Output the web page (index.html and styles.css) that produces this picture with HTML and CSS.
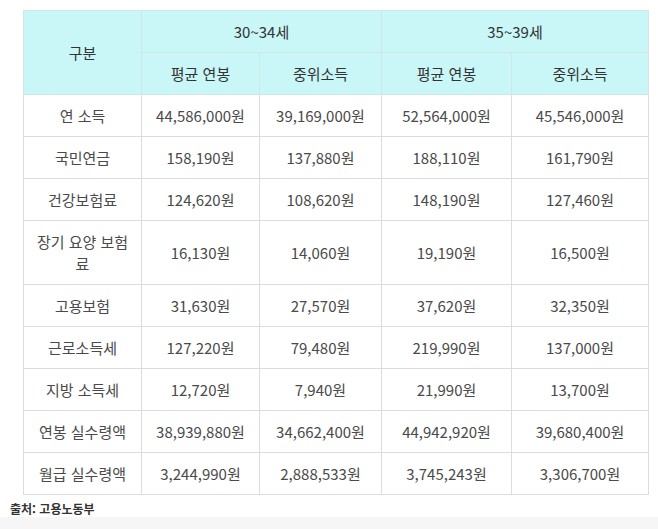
FILE: index.html
```html
<!DOCTYPE html>
<html lang="ko">
<head>
<meta charset="utf-8">
<link rel="stylesheet" href="styles.css">
</head>
<body>
<div class="page">
  <table class="salary">
    <colgroup>
      <col class="c1"><col class="c2"><col class="c3"><col class="c4"><col class="c5">
    </colgroup>
    <thead>
      <tr class="hrow">
        <th rowspan="2">구분</th>
        <th colspan="2">30~34세</th>
        <th colspan="2">35~39세</th>
      </tr>
      <tr class="hrow">
        <th>평균 연봉</th>
        <th>중위소득</th>
        <th>평균 연봉</th>
        <th>중위소득</th>
      </tr>
    </thead>
    <tbody>
      <tr><td>연 소득</td><td>44,586,000원</td><td>39,169,000원</td><td>52,564,000원</td><td>45,546,000원</td></tr>
      <tr><td>국민연금</td><td>158,190원</td><td>137,880원</td><td>188,110원</td><td>161,790원</td></tr>
      <tr><td>건강보험료</td><td>124,620원</td><td>108,620원</td><td>148,190원</td><td>127,460원</td></tr>
      <tr class="tall"><td>장기 요양 보험료</td><td>16,130원</td><td>14,060원</td><td>19,190원</td><td>16,500원</td></tr>
      <tr><td>고용보험</td><td>31,630원</td><td>27,570원</td><td>37,620원</td><td>32,350원</td></tr>
      <tr><td>근로소득세</td><td>127,220원</td><td>79,480원</td><td>219,990원</td><td>137,000원</td></tr>
      <tr><td>지방 소득세</td><td>12,720원</td><td>7,940원</td><td>21,990원</td><td>13,700원</td></tr>
      <tr><td>연봉 실수령액</td><td>38,939,880원</td><td>34,662,400원</td><td>44,942,920원</td><td>39,680,400원</td></tr>
      <tr><td>월급 실수령액</td><td>3,244,990원</td><td>2,888,533원</td><td>3,745,243원</td><td>3,306,700원</td></tr>
    </tbody>
  </table>
  <p class="source">출처: 고용노동부</p>
</div>
<div class="band"></div>
</body>
</html>
```
FILE: styles.css
```css
html, body {
  margin: 0;
  padding: 0;
  background: #fff;
}
body {
  font-family: "Noto Sans CJK KR", "Noto Sans", sans-serif;
  color: #4a4a4a;
}
.page {
  padding: 10px 0 0 0;
}
.salary {
  margin-left: 23px;
  width: 625px;
  border-collapse: collapse;
  table-layout: fixed;
  font-size: 15px;
}
.c1 { width: 118px; }
.c2 { width: 118px; }
.c3 { width: 122px; }
.c4 { width: 130px; }
.c5 { width: 137px; }
.salary th,
.salary td {
  border: 1px solid #dddddd;
  text-align: center;
  vertical-align: middle;
  padding: 0 11px;
  line-height: 22px;
  height: 42px;
  box-sizing: border-box;
  font-weight: normal;
}
.salary th {
  background: #c9f6f6;
  color: #333;
  border-color: #d3e6e6;
}
.hrow th { height: 42px; }
.salary tr.tall td { height: 64px; }
.source {
  margin: 6px 0 0 10px;
  font-size: 12px;
  font-weight: bold;
  color: #333;
  line-height: 16px;
}
.band {
  height: 12px;
  background: #f6f6f6;
}
```
